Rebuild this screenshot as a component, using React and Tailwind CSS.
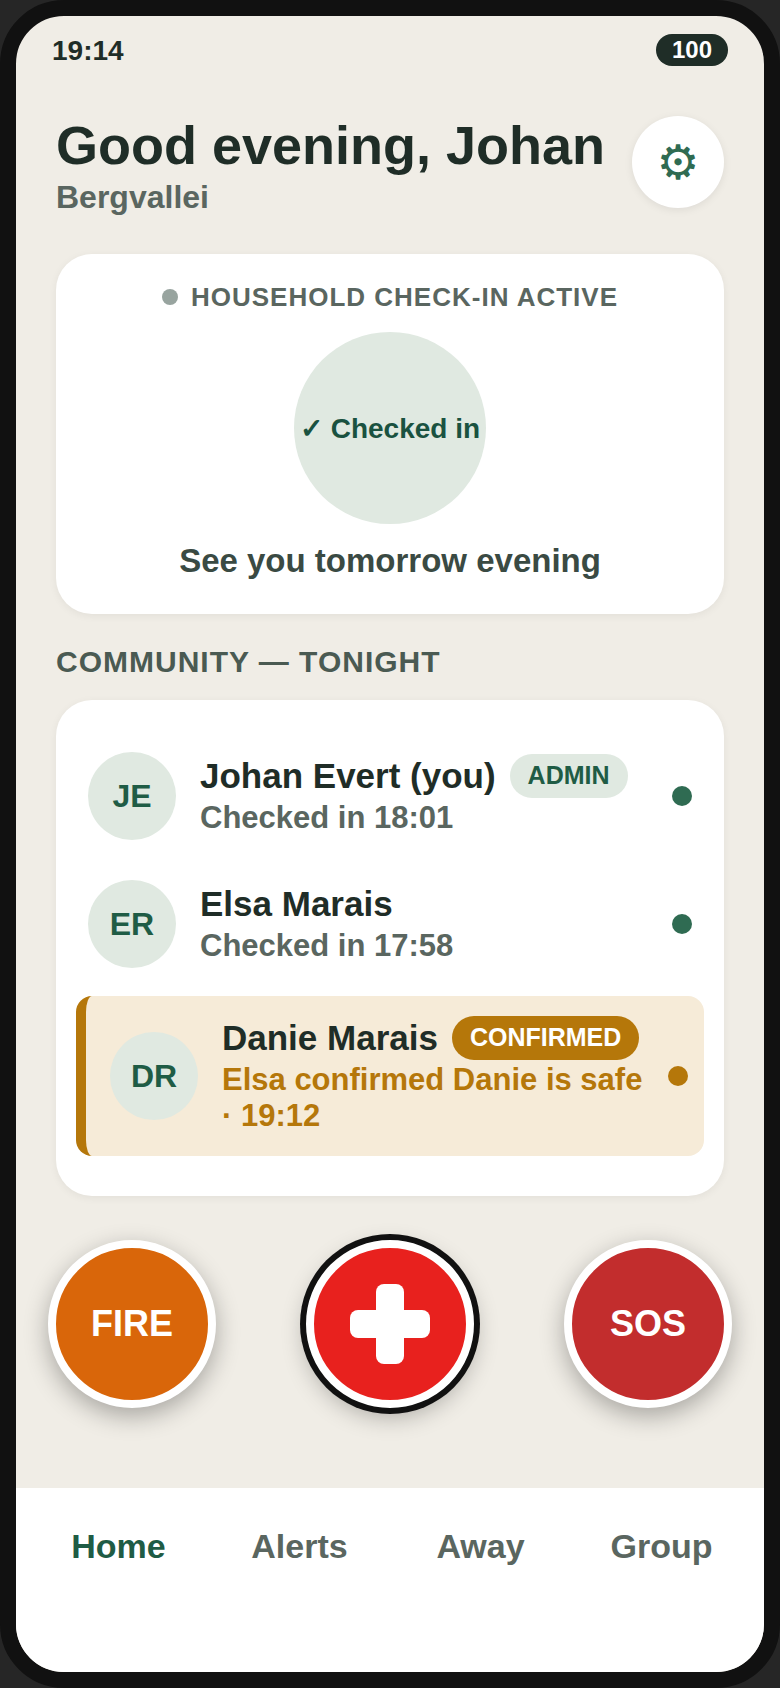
const Row = ({ initials, name, sub, badge }) => (
  <div className="flex items-center gap-6 px-3 py-5">
    <div className="w-[88px] h-[88px] rounded-full bg-[#e0e9e1] flex items-center justify-center text-[#1f5c45] text-[32px] font-bold shrink-0">{initials}</div>
    <div className="flex-1 min-w-0">
      <div className="flex items-center gap-3.5 h-[44px] -mt-[1px]">
        <span className="text-[35px] leading-[44px] font-bold text-[#1f2d27] whitespace-nowrap">{name}</span>
        {badge && <span className="h-11 px-[18px] rounded-full bg-[#e0e9e1] text-[#1f5c45] text-[25px] font-bold flex items-center">{badge}</span>}
      </div>
      <div className="text-[31px] leading-[40px] font-bold text-[#5a6660]">{sub}</div>
    </div>
    <div className="w-5 h-5 rounded-full bg-[#2f6b52] shrink-0" />
  </div>
);

const Round = ({ bg, children }) => (
  <button className={`w-[168px] h-[168px] rounded-full border-8 border-white ${bg} shadow-[0_8px_24px_rgba(0,0,0,0.3)] text-white text-[36px] font-bold flex items-center justify-center shrink-0`}>{children}</button>
);

export default function App() {
  return (
    <div className="w-[780px] h-[1688px] bg-[#262626] font-['Liberation_Sans',Arial,sans-serif]">
      <div className="w-full h-full border-[16px] border-[#111111] rounded-[64px] overflow-hidden bg-[#f0ede6] flex flex-col">
        <div className="flex items-center justify-between px-9 pt-[18px] h-[50px] shrink-0">
          <span className="text-[28px] font-bold text-[#1f2d27] pt-[2px]">19:14</span>
          <span className="h-8 px-4 rounded-full bg-[#1f2d27] text-white text-[24px] font-bold flex items-center">100</span>
        </div>
        <div className="flex items-start justify-between px-10 mt-[48px]">
          <div>
            <div className="text-[54px] leading-[62px] font-bold text-[#1f2d27] whitespace-nowrap">Good evening, Johan</div>
            <div className="text-[32px] leading-[42px] font-bold text-[#5a6660]">Bergvallei</div>
          </div>
          <div className="mt-[2px] w-[92px] h-[92px] rounded-full bg-white shadow-[0_2px_8px_rgba(0,0,0,0.08)] flex items-center justify-center text-[#2f6b52] text-[48px] font-['DejaVu_Sans',sans-serif]">⚙</div>
        </div>
        <div className="mx-10 mt-[36px] h-[360px] rounded-[36px] bg-white shadow-[0_2px_8px_rgba(0,0,0,0.06)] flex flex-col items-center pt-7 shrink-0">
          <div className="flex items-center gap-[13px] h-[30px]">
            <span className="w-4 h-4 rounded-full bg-[#98a49f]" />
            <span className="text-[26px] font-bold tracking-[1px] text-[#5a6660]">HOUSEHOLD CHECK-IN ACTIVE</span>
          </div>
          <div className="w-48 h-48 rounded-full bg-[#e0e9e1] mt-[20px] pt-[2px] flex items-center justify-center text-[#1a5240] text-[28px] font-bold whitespace-nowrap">✓ Checked in</div>
          <div className="mt-[17px] text-[33px] leading-[40px] font-bold text-[#3a4a43]">See you tomorrow evening</div>
        </div>
        <div className="px-10 mt-[29px] text-[30px] leading-[38px] font-bold tracking-[1px] text-[#4a5a52]">COMMUNITY — TONIGHT</div>
        <div className="mx-10 mt-[19px] rounded-[36px] bg-white shadow-[0_2px_8px_rgba(0,0,0,0.06)] px-5 pt-8 pb-10">
          <Row initials="JE" name="Johan Evert (you)" sub="Checked in 18:01" badge="ADMIN" />
          <Row initials="ER" name="Elsa Marais" sub="Checked in 17:58" />
          <div className="mt-2 h-40 rounded-2xl bg-[#f6ebd8] border-l-[10px] border-[#b5770a] flex items-center gap-6 pl-6 pr-4">
            <div className="w-[88px] h-[88px] rounded-full bg-[#e0e9e1] flex items-center justify-center text-[#1f5c45] text-[32px] font-bold shrink-0">DR</div>
            <div className="flex-1 min-w-0">
              <div className="flex items-center gap-3.5 h-[44px] -mt-[2px] mb-[2px]">
                <span className="text-[35px] leading-[44px] font-bold text-[#1f2d27] whitespace-nowrap">Danie Marais</span>
                <span className="h-11 px-[18px] rounded-full bg-[#b5770a] text-white text-[25px] font-bold flex items-center">CONFIRMED</span>
              </div>
              <div className="text-[31px] leading-[36px] font-bold text-[#b5770a]">Elsa confirmed Danie is safe · 19:12</div>
            </div>
            <div className="w-5 h-5 rounded-full bg-[#b5770a] shrink-0" />
          </div>
        </div>
        <div className="flex items-center justify-between px-8 mt-[44px]">
          <Round bg="bg-[#d9660a]">FIRE</Round>
          <button className="w-[168px] h-[168px] rounded-full border-8 border-white bg-[#e8211e] shadow-[0_0_0_6px_#111111,0_8px_24px_rgba(0,0,0,0.3)] flex items-center justify-center shrink-0">
            <svg width="80" height="80" viewBox="0 0 80 80"><rect x="26" y="0" width="28" height="80" rx="8" fill="#fff" /><rect x="0" y="26" width="80" height="28" rx="8" fill="#fff" /></svg>
          </button>
          <Round bg="bg-[#c22d2d]">SOS</Round>
        </div>
        <div className="mt-auto h-[184px] bg-white grid grid-cols-4 px-3 pt-[37px] text-[34px] leading-[42px] font-bold text-[#5a6660] text-center shrink-0">
          <span className="text-[#1f5c45]">Home</span>
          <span>Alerts</span>
          <span>Away</span>
          <span>Group</span>
        </div>
      </div>
    </div>
  );
}
